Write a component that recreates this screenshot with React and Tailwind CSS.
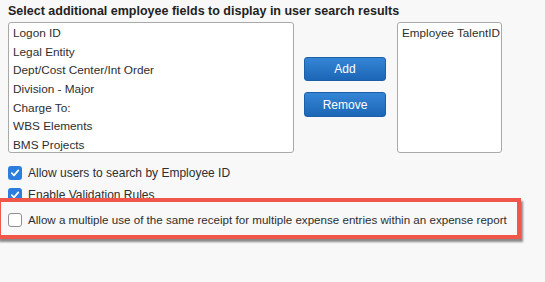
import React from "react";

const leftItems = [
  "Logon ID",
  "Legal Entity",
  "Dept/Cost Center/Int Order",
  "Division - Major",
  "Charge To:",
  "WBS Elements",
  "BMS Projects",
];

function Check({ checked }) {
  if (checked) {
    return (
      <span className="flex h-[14px] w-[14px] shrink-0 items-center justify-center rounded-[3px] bg-[#2d7ddf]">
        <svg width="10" height="10" viewBox="0 0 10 10" fill="none">
          <path d="M1.8 5.2 L4 7.4 L8.3 2.4" stroke="white" strokeWidth="1.7" strokeLinecap="round" strokeLinejoin="round" />
        </svg>
      </span>
    );
  }
  return <span className="h-[14px] w-[14px] shrink-0 rounded-[3px] border border-[#8e8e93] bg-white" />;
}

export default function App() {
  return (
    <div className="relative h-[282px] w-[545px] overflow-hidden bg-[#f8f8f8] text-[#2e2e2e]" style={{ fontFamily: '"Liberation Sans", Arial, Helvetica, sans-serif' }}>
      <div className="pl-[8px] pt-[3px]">
        <div className="whitespace-nowrap text-[12.5px] font-bold leading-[16px] text-[#222]">
          Select additional employee fields to display in user search results
        </div>
        <div className="mt-[3px] flex">
          <div className="h-[131px] w-[286px] rounded-[3px] border border-[#a9a9a9] bg-white pl-[4px] pt-[1px]">
            {leftItems.map((t) => (
              <div key={t} className="h-[18.7px] whitespace-nowrap text-[11.8px] leading-[18.7px]">{t}</div>
            ))}
          </div>
          <div className="ml-[10px] flex flex-col gap-[11px] pt-[35px]">
            <button className="h-[24px] w-[82px] rounded-[3px] border border-[#1b5fa8] bg-gradient-to-b from-[#3585d6] to-[#1c66b6] text-[12px] text-white">Add</button>
            <button className="h-[25px] w-[82px] rounded-[3px] border border-[#1b5fa8] bg-gradient-to-b from-[#3585d6] to-[#1c66b6] text-[12px] text-white">Remove</button>
          </div>
          <div className="ml-[11px] h-[131px] w-[105px] rounded-[3px] border border-[#a9a9a9] bg-white pl-[4px] pt-[1px]">
            <div className="h-[18.7px] whitespace-nowrap text-[11.7px] leading-[18.7px]">Employee TalentID</div>
          </div>
        </div>
        <div className="mt-[12px] flex items-center gap-[6px] text-[12px] leading-[16px]">
          <Check checked />
          <span className="whitespace-nowrap">Allow users to search by Employee ID</span>
        </div>
        <div className="mt-[6px] flex items-center gap-[6px] text-[12px] leading-[16px]">
          <Check checked />
          <span className="whitespace-nowrap">Enable Validation Rules</span>
        </div>
        <div className="mt-[9px] flex items-center gap-[6px] text-[11.6px] leading-[16px]">
          <Check checked={false} />
          <span className="whitespace-nowrap">Allow a multiple use of the same receipt for multiple expense entries within an expense report</span>
        </div>
      </div>
      <div className="pointer-events-none absolute left-[-3px] top-[198px] h-[41px] w-[524px] border-[4px] border-[#f0564a] shadow-[2px_3px_2px_rgba(0,0,0,0.45)]" />
    </div>
  );
}
